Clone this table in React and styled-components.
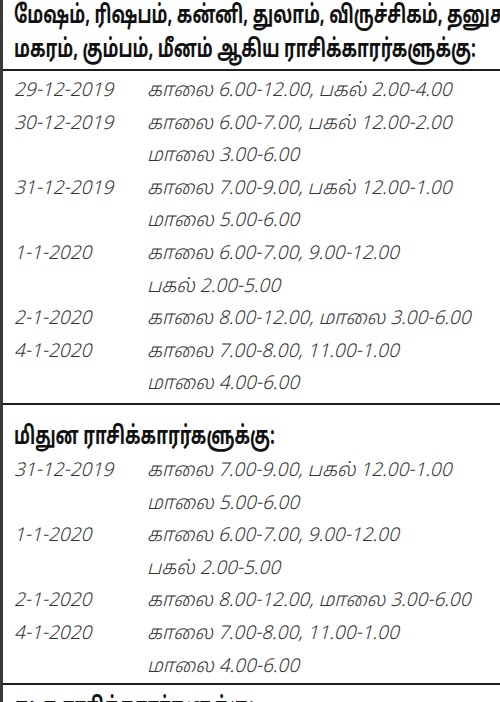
import styled, { createGlobalStyle } from "styled-components";

const GlobalStyle = createGlobalStyle`
	html, body {
		margin: 0;
		padding: 0;
		background: #ffffff;
	}
`;

const sections = [
	{
		title: ["மேஷம், ரிஷபம், கன்னி, துலாம், விருச்சிகம், தனுசு,", "மகரம், கும்பம், மீனம் ஆகிய ராசிக்காரர்களுக்கு:"],
		ruled: true,
		top: 0,
		rows: [
			{ date: "29-12-2019", times: ["காலை 6.00-12.00, பகல் 2.00-4.00"] },
			{ date: "30-12-2019", times: ["காலை 6.00-7.00, பகல் 12.00-2.00", "மாலை 3.00-6.00"] },
			{ date: "31-12-2019", times: ["காலை 7.00-9.00, பகல் 12.00-1.00", "மாலை 5.00-6.00"] },
			{ date: "1-1-2020", times: ["காலை 6.00-7.00, 9.00-12.00", "பகல் 2.00-5.00"] },
			{ date: "2-1-2020", times: ["காலை 8.00-12.00, மாலை 3.00-6.00"] },
			{ date: "4-1-2020", times: ["காலை 7.00-8.00, 11.00-1.00", "மாலை 4.00-6.00"] },
		],
	},
	{
		title: ["மிதுன ராசிக்காரர்களுக்கு:"],
		top: 16,
		rows: [
			{ date: "31-12-2019", times: ["காலை 7.00-9.00, பகல் 12.00-1.00", "மாலை 5.00-6.00"] },
			{ date: "1-1-2020", times: ["காலை 6.00-7.00, 9.00-12.00", "பகல் 2.00-5.00"] },
			{ date: "2-1-2020", times: ["காலை 8.00-12.00, மாலை 3.00-6.00"] },
			{ date: "4-1-2020", times: ["காலை 7.00-8.00, 11.00-1.00", "மாலை 4.00-6.00"] },
		],
	},
	{
		title: ["கடக ராசிக்காரர்களுக்கு:"],
		top: 7,
		rows: [],
	},
];

export default function App() {
	return (
		<>
			<GlobalStyle />
			<Sheet>
				{sections.map((section, i) => (
					<Section key={i} first={i === 0} top={section.top}>
						<Title ruled={section.ruled}>
							{section.title.map((line) => (
								<TitleLine key={line}>{line}</TitleLine>
							))}
						</Title>
						<Rows ruled={section.ruled}>
							{section.rows.map((row) => (
								<Row key={row.date}>
									<DateCell>{row.date}</DateCell>
									<TimeCell>
										{row.times.map((t) => (
											<div key={t}>{t}</div>
										))}
									</TimeCell>
								</Row>
							))}
						</Rows>
					</Section>
				))}
			</Sheet>
		</>
	);
}

const Sheet = styled.div`
	width: 500px;
	height: 702px;
	overflow: hidden;
	box-sizing: border-box;
	border-left: 3px solid #3a3a3a;
	background: #ffffff;
`;

const Section = styled.section`
	border-top: ${(p) => (p.first ? "none" : "2px solid #1e1e1e")};
	padding-top: ${(p) => p.top}px;
	padding-bottom: ${(p) => (p.first ? "2px" : "0")};
`;

const Title = styled.div`
	padding: 0 0 ${(p) => (p.ruled ? "1px" : "0")} 11px;
	border-bottom: ${(p) => (p.ruled ? "2px solid #1e1e1e" : "none")};
	font-family: "Noto Sans Tamil", "Noto Sans", "Liberation Sans", sans-serif;
	font-weight: 700;
	font-size: 25px;
	line-height: 34px;
	color: #111111;
	white-space: nowrap;
	overflow: hidden;
`;

/* the print face is condensed; Noto Sans Tamil has no narrow cut here */
const TitleLine = styled.div`
	transform: scaleX(0.68);
	transform-origin: left center;
`;

const Rows = styled.div`
	display: flex;
	flex-direction: column;
	padding-top: ${(p) => (p.ruled ? "4px" : "0")};
`;

const Row = styled.div`
	display: grid;
	grid-template-columns: 133px 1fr;
	padding-left: 11px;
	font-family: "Noto Sans Tamil", "Liberation Sans", sans-serif;
	font-style: italic;
	font-weight: 300;
	font-size: 19px;
	line-height: 32.6px;
	color: #333333;
	white-space: nowrap;
`;

const DateCell = styled.div``;

const TimeCell = styled.div`
	display: flex;
	flex-direction: column;
`;
